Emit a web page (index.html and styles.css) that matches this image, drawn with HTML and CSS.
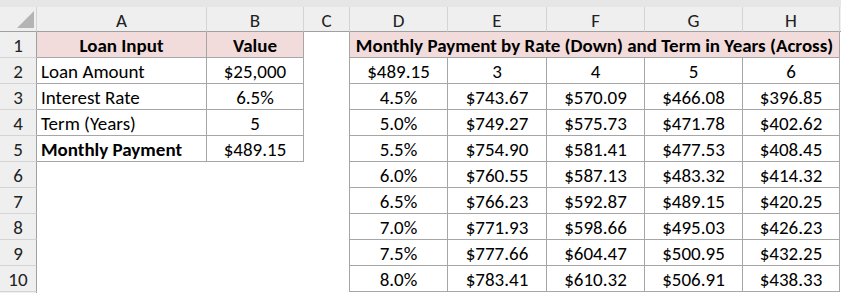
FILE: index.html
```html
<!DOCTYPE html>
<html lang="en">
<head>
<meta charset="utf-8">
<title>Loan Payment Table</title>
<link rel="stylesheet" href="styles.css">
</head>
<body>
<div class="sheet">
  <div class="topbar"></div>

  <div class="hd corner"><div class="tri"></div></div>
  <div class="hd">A</div>
  <div class="hd">B</div>
  <div class="hd">C</div>
  <div class="hd">D</div>
  <div class="hd">E</div>
  <div class="hd">F</div>
  <div class="hd">G</div>
  <div class="hd">H</div>
  <div class="hd rest"></div>

  <div class="rh">1</div>
  <div class="c pink b">Loan Input</div>
  <div class="c pink b">Value</div>
  <div class="gap"></div>
  <div class="c pink b title">Monthly Payment by Rate (Down) and Term in Years (Across)</div>
  <div class="blank"></div>

  <div class="rh">2</div>
  <div class="c l">Loan Amount</div>
  <div class="c">$25,000</div>
  <div class="gap"></div>
  <div class="c">$489.15</div>
  <div class="c">3</div>
  <div class="c">4</div>
  <div class="c">5</div>
  <div class="c">6</div>
  <div class="blank"></div>

  <div class="rh">3</div>
  <div class="c l">Interest Rate</div>
  <div class="c">6.5%</div>
  <div class="gap"></div>
  <div class="c">4.5%</div>
  <div class="c">$743.67</div>
  <div class="c">$570.09</div>
  <div class="c">$466.08</div>
  <div class="c">$396.85</div>
  <div class="blank"></div>

  <div class="rh">4</div>
  <div class="c l">Term (Years)</div>
  <div class="c">5</div>
  <div class="gap"></div>
  <div class="c">5.0%</div>
  <div class="c">$749.27</div>
  <div class="c">$575.73</div>
  <div class="c">$471.78</div>
  <div class="c">$402.62</div>
  <div class="blank"></div>

  <div class="rh">5</div>
  <div class="c l b">Monthly Payment</div>
  <div class="c">$489.15</div>
  <div class="gap"></div>
  <div class="c">5.5%</div>
  <div class="c">$754.90</div>
  <div class="c">$581.41</div>
  <div class="c">$477.53</div>
  <div class="c">$408.45</div>
  <div class="blank"></div>

  <div class="rh">6</div>
  <div class="blank"></div>
  <div class="blank"></div>
  <div class="gap"></div>
  <div class="c">6.0%</div>
  <div class="c">$760.55</div>
  <div class="c">$587.13</div>
  <div class="c">$483.32</div>
  <div class="c">$414.32</div>
  <div class="blank"></div>

  <div class="rh">7</div>
  <div class="blank"></div>
  <div class="blank"></div>
  <div class="gap"></div>
  <div class="c">6.5%</div>
  <div class="c">$766.23</div>
  <div class="c">$592.87</div>
  <div class="c">$489.15</div>
  <div class="c">$420.25</div>
  <div class="blank"></div>

  <div class="rh">8</div>
  <div class="blank"></div>
  <div class="blank"></div>
  <div class="gap"></div>
  <div class="c">7.0%</div>
  <div class="c">$771.93</div>
  <div class="c">$598.66</div>
  <div class="c">$495.03</div>
  <div class="c">$426.23</div>
  <div class="blank"></div>

  <div class="rh">9</div>
  <div class="blank"></div>
  <div class="blank"></div>
  <div class="gap"></div>
  <div class="c">7.5%</div>
  <div class="c">$777.66</div>
  <div class="c">$604.47</div>
  <div class="c">$500.95</div>
  <div class="c">$432.25</div>
  <div class="blank"></div>

  <div class="rh">10</div>
  <div class="blank"></div>
  <div class="blank"></div>
  <div class="gap"></div>
  <div class="c">8.0%</div>
  <div class="c">$783.41</div>
  <div class="c">$610.32</div>
  <div class="c">$506.91</div>
  <div class="c">$438.33</div>
  <div class="blank"></div>

  <div class="rh"></div>
</div>
</body>
</html>
```

FILE: styles.css
```css
html, body {
  margin: 0;
  padding: 0;
  background: #ffffff;
}

.sheet {
  display: grid;
  grid-template-columns: 37px 170px 97px 46px 98px 99px 98px 98px 97px 1fr;
  grid-template-rows: 7px 25px repeat(10, 26px) 1fr;
  width: 841px;
  height: 293px;
  overflow: hidden;
  font-family: Carlito, Lato, "Open Sans", sans-serif;
  font-size: 19px;
  line-height: 1;
  color: #000;
}

.sheet > div {
  box-sizing: border-box;
  min-width: 0;
}

.topbar {
  grid-column: 1 / -1;
  background: #e6e6e6;
}

.hd {
  background: #efefef;
  border-right: 1px solid #d4d4d4;
  border-bottom: 1px solid #a0a0a0;
  display: flex;
  align-items: center;
  justify-content: center;
  color: #222;
  padding-top: 2px;
}

.hd.rest {
  border-right: none;
}

.corner {
  justify-content: flex-end;
  align-items: flex-end;
  padding: 0 2px 3px 0;
}

.tri {
  width: 17px;
  height: 17px;
  background: #b4b4b4;
  clip-path: polygon(100% 0, 100% 100%, 0 100%);
}

.rh {
  background: #efefef;
  border-right: 1px solid #a0a0a0;
  border-bottom: 1px solid #d4d4d4;
  display: flex;
  align-items: center;
  justify-content: center;
  color: #222;
  padding-top: 2px;
}

.c {
  border-right: 1px solid #a6a6a6;
  border-bottom: 1px solid #a6a6a6;
  display: flex;
  align-items: center;
  justify-content: center;
  white-space: nowrap;
  padding-top: 2px;
}

.l {
  justify-content: flex-start;
  padding-left: 4px;
}

.b {
  font-weight: 700;
}

.pink {
  background: #f2dcdb;
}

.title {
  grid-column: span 5;
}

.gap {
  border-right: 1px solid #a6a6a6;
}

.blank {
  background: #ffffff;
}
```
